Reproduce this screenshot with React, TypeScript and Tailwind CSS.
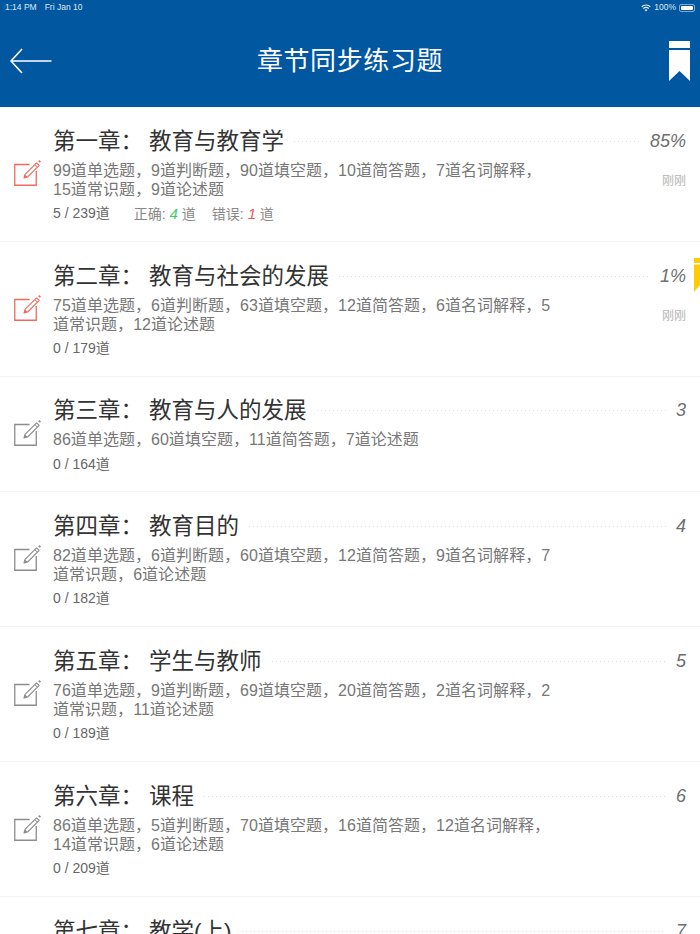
import React from "react";

const cjk = { fontFamily: '"Liberation Sans", "Noto Sans CJK SC", sans-serif' };

function EditIcon({ color }: { color: string }) {
  return (
    <svg width="28" height="28" viewBox="0 0 28 28" fill="none" className="block">
      <path d="M15.5 5.500H0.750V26.250H22.250V12" stroke={color} strokeWidth="1.300" />
      <path d="M10 19l1-3.600L22.600 3.800l2.600 2.600L13.600 18z" stroke={color} strokeWidth="1.100" fill="none" strokeLinejoin="round" />
      <path d="M20.800 5.600l2.600 2.600" stroke={color} strokeWidth="1" />
      <path d="M24.200 2.200l1.200-1.200 1.600 1.600-1.200 1.200z" fill={color} />
      <path d="M10 19l1-3.600 2.600 2.600z" fill={color} />
    </svg>
  );
}

type Row = {
  prefix: string;
  title: string;
  right: string;
  lines: string[];
  count: string;
  red?: boolean;
  time?: boolean;
  stats?: boolean;
  mark?: boolean;
  h: string;
};

const rows: Row[] = [
  { prefix: "第一章：", title: "教育与教育学", right: "85%", red: true, time: true, stats: true, count: "5 / 239道", h: "h-[135px]",
    lines: ["99道单选题，9道判断题，90道填空题，10道简答题，7道名词解释，", "15道常识题，9道论述题"] },
  { prefix: "第二章：", title: "教育与社会的发展", right: "1%", red: true, time: true, mark: true, count: "0 / 179道", h: "h-[135px]",
    lines: ["75道单选题，6道判断题，63道填空题，12道简答题，6道名词解释，5", "道常识题，12道论述题"] },
  { prefix: "第三章：", title: "教育与人的发展", right: "3", count: "0 / 164道", h: "h-[115px]",
    lines: ["86道单选题，60道填空题，11道简答题，7道论述题"] },
  { prefix: "第四章：", title: "教育目的", right: "4", count: "0 / 182道", h: "h-[135px]",
    lines: ["82道单选题，6道判断题，60道填空题，12道简答题，9道名词解释，7", "道常识题，6道论述题"] },
  { prefix: "第五章：", title: "学生与教师", right: "5", count: "0 / 189道", h: "h-[135px]",
    lines: ["76道单选题，9道判断题，69道填空题，20道简答题，2道名词解释，2", "道常识题，11道论述题"] },
  { prefix: "第六章：", title: "课程", right: "6", count: "0 / 209道", h: "h-[135px]",
    lines: ["86道单选题，5道判断题，70道填空题，16道简答题，12道名词解释，", "14道常识题，6道论述题"] },
  { prefix: "第七章：", title: "教学(上)", right: "7", count: "", h: "h-[135px]", lines: [] },
];

export default function App() {
  return (
    <div className="w-[700px] h-[934px] overflow-hidden bg-white flex flex-col" style={cjk}>
      <header className="h-[107px] shrink-0 bg-[#0257a1] text-white flex flex-col">
        <div className="h-[14px] flex items-center justify-between pl-[5px] pr-[5px] pt-[1px] text-[8.5px] text-[#dfe9f3]">
          <div className="flex gap-[8px]"><span>1:14 PM</span><span>Fri Jan 10</span></div>
          <div className="flex items-center gap-[3px]">
            <svg width="10" height="8" viewBox="0 0 20 16" fill="none" stroke="#e6eef6" strokeWidth="2.200">
              <path d="M1.500 5.500C6 1 14 1 18.500 5.500M4.500 9C8 6 12 6 15.500 9" />
              <path d="M7 11.500c2-1.500 4-1.500 6 0l-3 3.500z" fill="#e6eef6" stroke="none" />
            </svg>
            <span>100%</span>
            <div className="w-[16px] h-[8px] rounded-[2px] border border-[#7fa8cf] p-[1px]"><div className="w-full h-full bg-white rounded-[1px]" /></div>
          </div>
        </div>
        <div className="flex-1 flex items-center justify-between pl-[10px] pr-[10px]">
          <div className="w-[60px] flex justify-start">
            <svg width="42" height="26" viewBox="0 0 42 26" fill="none" stroke="white" strokeWidth="1.600">
              <path d="M1 13H41.500M12 1L1 13l11 12" />
            </svg>
          </div>
          <span className="text-[26px] font-normal tracking-[0.6px] text-white pt-[2px]">章节同步练习题</span>
          <div className="w-[60px] flex justify-end">
            <svg width="21" height="40" viewBox="0 0 21 40" fill="white">
              <rect x="0" y="0" width="21" height="7" />
              <path d="M0 9h21v31l-10.500-10L0 40z" />
            </svg>
          </div>
        </div>
      </header>
      <main className="flex-1 overflow-hidden">
        {rows.map((r) => (
          <div key={r.prefix} className={`${r.h} relative flex border-b border-[#f3f3f3] pl-[14px] pr-[14px]`}>
            <div className={`w-[39px] shrink-0 ${r.lines.length > 1 ? "pt-[52px]" : "pt-[42px]"}`}>
              <EditIcon color={r.red ? "#f0695c" : "#8c8c8c"} />
            </div>
            <div className={`flex-1 min-w-0 ${r.lines.length === 1 ? "pt-[17px]" : "pt-[18px]"}`}>
              <div className="flex items-center h-[33px]">
                <span className="text-[22.5px] text-[#333333] whitespace-nowrap">{r.prefix}</span>
                <span className="text-[22.5px] text-[#333333] whitespace-nowrap ml-[6px]">{r.title}</span>
                <div className="flex-1 mx-[10px] h-px bg-[repeating-linear-gradient(90deg,#dddddd_0,#dddddd_1px,transparent_1px,transparent_4px)]" />
                <span className="text-[18px] italic font-light text-[#6e6e6e]">{r.right}</span>
              </div>
              <div className="flex">
                <div className="flex-1 mt-[3px]">
                  {r.lines.map((l) => (
                    <div key={l} className="text-[16px] leading-[19px] text-[#777777] whitespace-nowrap tracking-[0.03px]">{l}</div>
                  ))}
                  {r.count && (
                    <div className={`${r.lines.length === 1 ? "mt-[6px]" : "mt-[5px]"} text-[14px] leading-[19px] text-[#666666] flex whitespace-pre`}>
                      <span>{r.count}</span>
                      {r.stats && (
                        <span className="ml-[24px] text-[#888888]">正确: <i className="text-[15px] text-[#3ecb6c]">4</i> 道<span className="ml-[16px]">错误: </span><i className="text-[15px] text-[#f0584c]">1</i> 道</span>
                      )}
                    </div>
                  )}
                </div>
                {r.time && <div className="text-[12px] text-[#b5b5b5] pt-[14px]">刚刚</div>}
              </div>
            </div>
            {r.mark && (
              <svg width="6" height="34" viewBox="0 0 6 34" fill="#ffcc00" className="absolute right-0 top-[16px]">
                <rect x="0" y="0" width="6" height="5" />
                <path d="M0 6.500h6V27L0 34z" />
              </svg>
            )}
          </div>
        ))}
      </main>
    </div>
  );
}
